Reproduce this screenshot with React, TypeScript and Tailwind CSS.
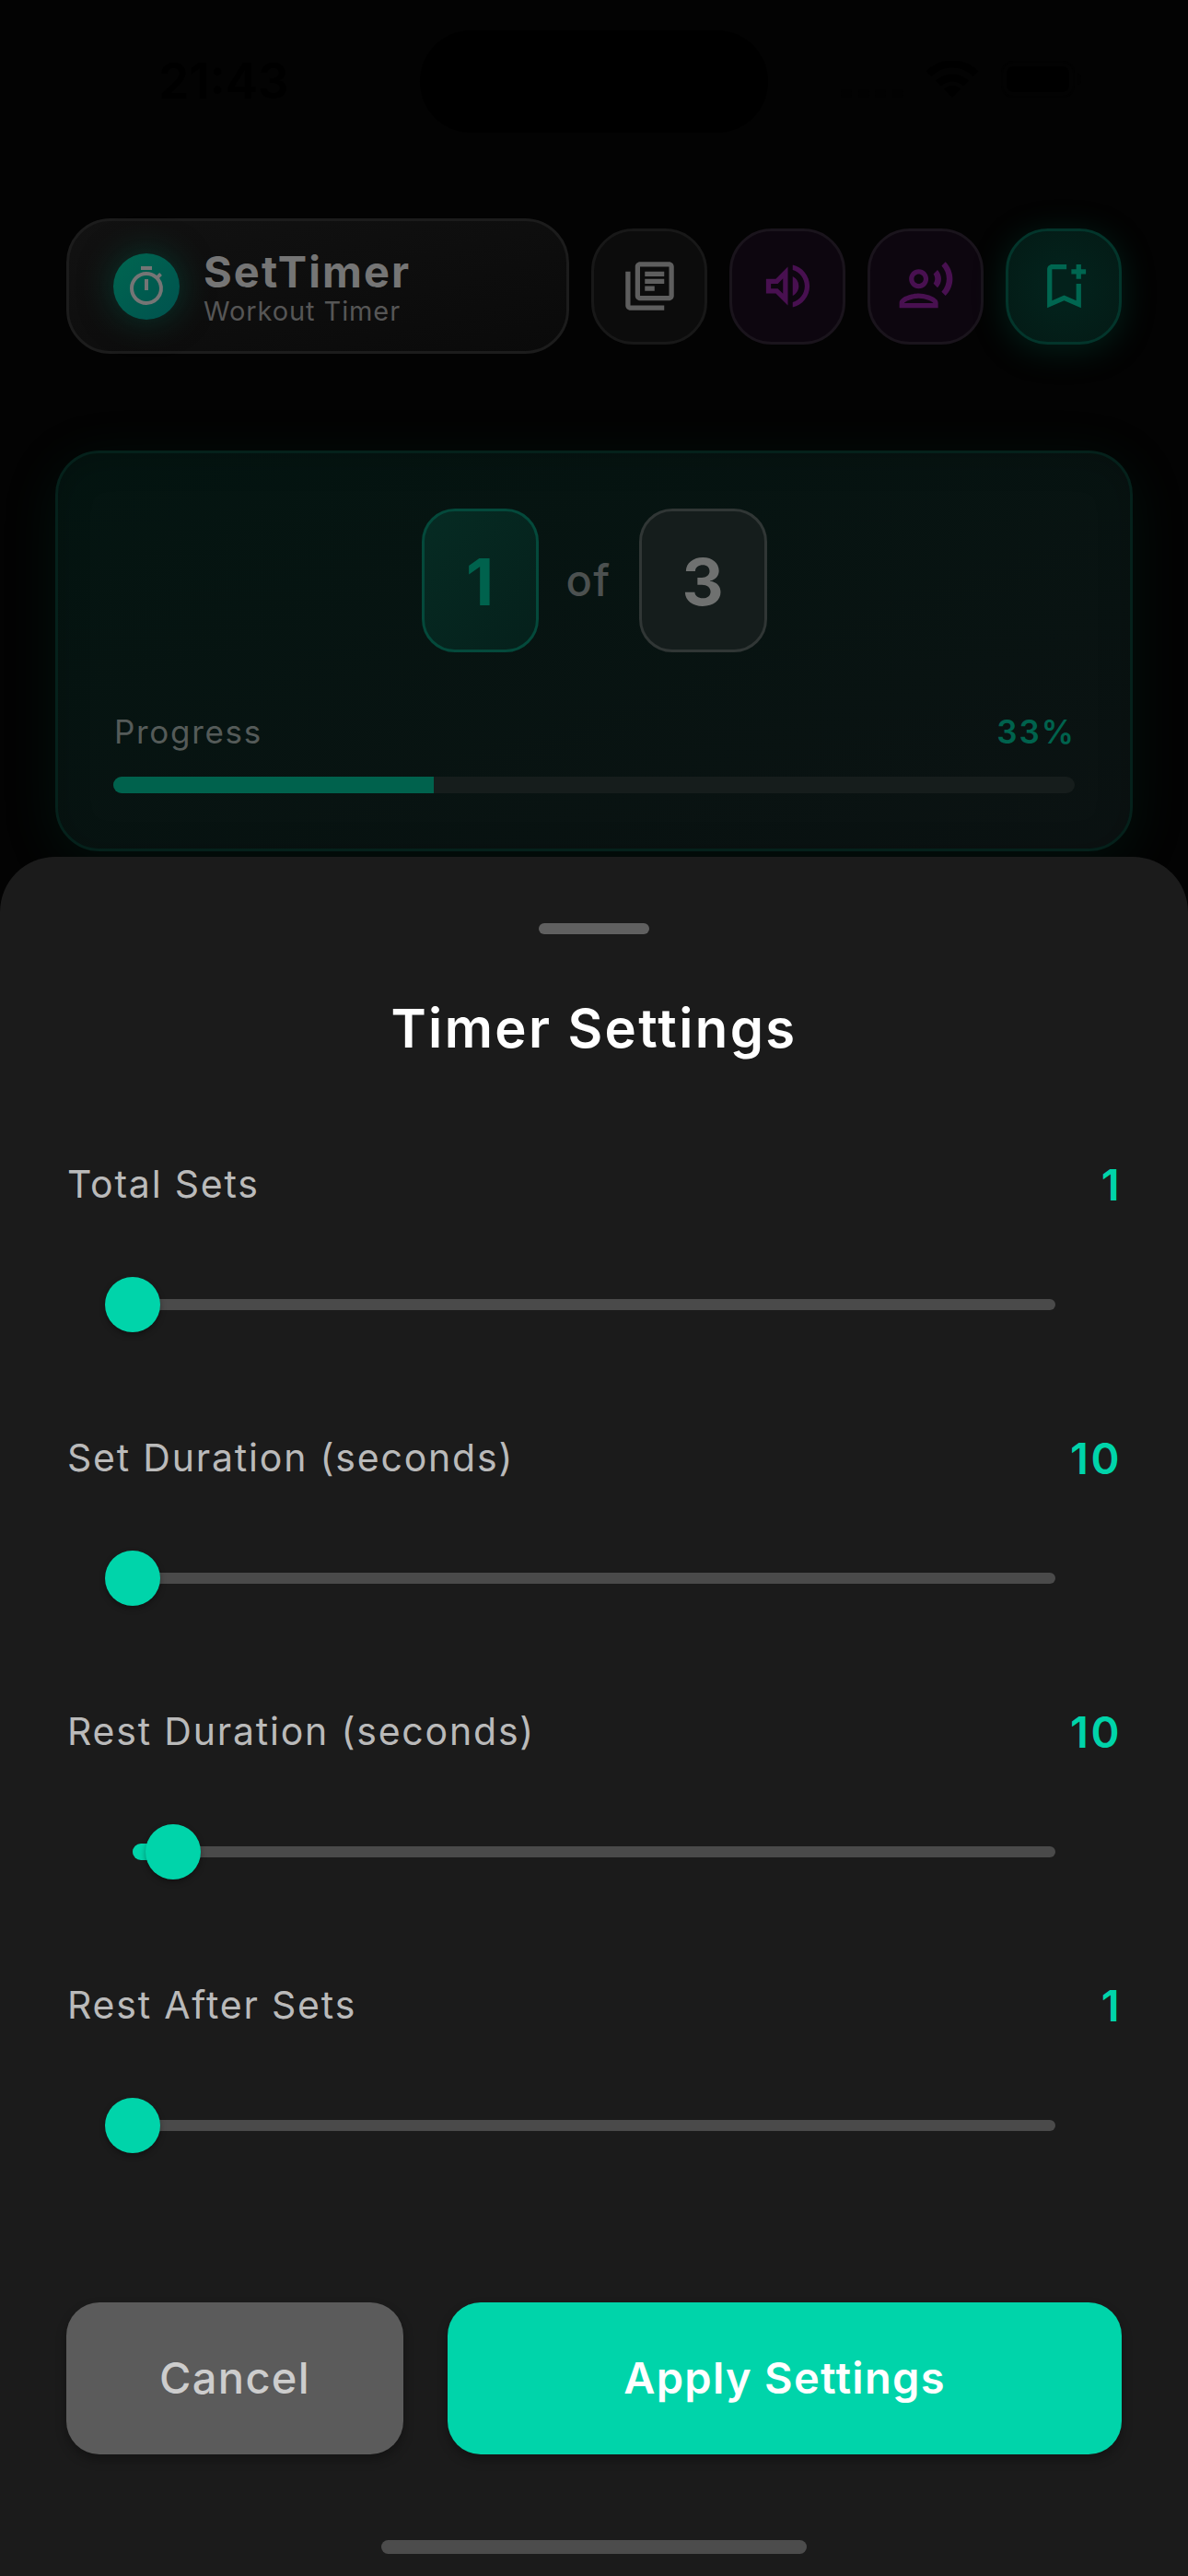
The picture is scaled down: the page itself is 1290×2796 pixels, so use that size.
import type { ReactNode } from 'react';
import {
  MdOutlineBookmarkAdd,
  MdOutlineLibraryBooks,
  MdOutlineRecordVoiceOver,
  MdOutlineTimer,
  MdOutlineVolumeUp,
} from 'react-icons/md';

type Setting = { label: string; value: number; fraction: number };

const settings: Setting[] = [
  { label: 'Total Sets', value: 1, fraction: 0 },
  { label: 'Set Duration (seconds)', value: 10, fraction: 0 },
  { label: 'Rest Duration (seconds)', value: 10, fraction: 43.5 / 1002 },
  { label: 'Rest After Sets', value: 1, fraction: 0 },
];

function StatusBar() {
  return (
    <div className="flex h-[177px] items-start">
      <div className="flex h-[177px] w-[456px] justify-center pt-[61px] pl-[30px]">
        <span className="text-[53px] leading-[54px] font-semibold text-black">21:43</span>
      </div>
      <div className="mt-[33px] h-[111px] w-[378px] rounded-full bg-black" />
      <div className="flex flex-1 items-center pt-[66px] pl-[79px]">
        <div className="flex h-10 w-[68px] items-end justify-between">
          {[0, 1, 2, 3].map((dot) => (
            <span key={dot} className="h-[9px] w-3 rounded-[3px] bg-[#020202]" />
          ))}
        </div>
        <svg className="ml-[24px] h-10 w-[58px]" viewBox="0 0 58 40">
          <path d="M29 40l-9-9.500a13 13 0 0 1 18 0z" />
          <path d="M14 24.500a21.500 21.500 0 0 1 30 0" fill="none" stroke="#000" strokeWidth="8" />
          <path d="M3.500 14a36.500 36.500 0 0 1 51 0" fill="none" stroke="#000" strokeWidth="8" />
        </svg>
        <div className="ml-6 h-10 w-[80px] rounded-[13px] border-2 border-[#020202] p-1">
          <div className="h-full rounded-[8px] bg-black" />
        </div>
        <div className="ml-[3px] h-3 w-1 rounded-r-full bg-[#020202]" />
      </div>
    </div>
  );
}

function ToolButton({ className, children }: { className: string; children: ReactNode }) {
  return (
    <button
      className={`flex size-[126px] shrink-0 items-center justify-center rounded-[46px] border-3 text-[63px] ${className}`}
    >
      {children}
    </button>
  );
}

function Header() {
  return (
    <header className="mt-[60px] flex h-[147px] items-center gap-6 px-[72px]">
      <div className="flex h-full w-[546px] items-center rounded-[48px] border-3 border-[#1c1c1c] bg-linear-to-br from-[#121212] to-[#0a0a0a] pl-12">
        <div className="flex size-[72px] items-center justify-center rounded-full bg-linear-to-br from-[#006650] to-[#00524e] text-[48px] text-[#757575] shadow-[0_0_36px_#00624d80]">
          <MdOutlineTimer />
        </div>
        <div className="ml-[26px] flex flex-col pt-1.5">
          <span className="text-[47px] leading-[48px] font-bold tracking-[2.1px] text-[#757575]">SetTimer</span>
          <span className="text-[29px] leading-[37px] tracking-[0.9px] text-[#565656]">Workout Timer</span>
        </div>
      </div>
      <ToolButton className="border-[#181818] bg-[#0c0c0c] text-[#5e5e5e]">
        <MdOutlineLibraryBooks />
      </ToolButton>
      <ToolButton className="border-[#1a141c] bg-[#0d060f] text-[#481050]">
        <MdOutlineVolumeUp />
      </ToolButton>
      <ToolButton className="border-[#1a141c] bg-[#0d060f] text-[#481050]">
        <MdOutlineRecordVoiceOver />
      </ToolButton>
      <ToolButton className="border-[#03352b] bg-[radial-gradient(circle,#03211b_30%,#041a15_100%)] text-[#006650] shadow-[0_6px_36px_#00624d4d]">
        <MdOutlineBookmarkAdd />
      </ToolButton>
    </header>
  );
}

function ProgressCard() {
  return (
    <section className="mx-[60px] mt-[105px] h-[435px] rounded-[48px] border-3 border-[#05211b] bg-linear-to-br from-[#041511] to-[#0b1212] p-[60px] shadow-[0_12px_60px_#00624d26,inset_0_6px_36px_rgba(0,0,0,0.2)]">
      <div className="flex h-[156px] items-center justify-center">
        <div className="flex h-full w-[127px] items-center justify-center rounded-[36px] border-3 border-[#04493b] bg-linear-to-br from-[#062b23] to-[#05201b] pt-[3px] text-[70px] font-bold text-[#00624d]">
          1
        </div>
        <span className="w-[109px] text-center text-[47px] font-medium tracking-[1.5px] text-[#4c5150]">of</span>
        <div className="flex h-full w-[139px] items-center justify-center rounded-[36px] border-3 border-[#303635] bg-[#151d1c] pt-[3px] text-[70px] font-bold text-[#6f7170]">
          3
        </div>
      </div>
      <div className="mt-16 flex h-[45px] items-center justify-between text-[35px] leading-[45px]">
        <span className="pl-px tracking-[1.7px] text-[#555b59]">Progress</span>
        <span className="-mr-px font-semibold tracking-[2px] text-[#00624d]">33%</span>
      </div>
      <div className="mt-[26px] h-[18px] overflow-hidden rounded-[9px] bg-[#161d1c]">
        <div className="h-full w-1/3 bg-[#00624d]" />
      </div>
    </section>
  );
}

function SettingSlider({ label, value, fraction }: Setting) {
  const left = `${fraction * 100}%`;
  return (
    <div className="h-[297px] px-[72px]">
      <div className="flex h-[57px] items-center justify-between">
        <span className="pl-px text-[41px] leading-[57px] tracking-[1.8px] text-[#bababa]">{label}</span>
        <span className="text-[47px] leading-[57px] font-semibold tracking-[2.5px] text-[#00d4aa]">{value}</span>
      </div>
      <div className="mx-[72px] mt-[30px] flex h-[144px] items-center">
        <div className="relative h-3 w-full rounded-full bg-[#4a4a4a]">
          <div className="absolute -top-[3px] left-0 h-[18px] rounded-l-[9px] bg-[#00d4aa]" style={{ width: left }} />
          <div
            className="absolute -top-6 size-[60px] -translate-x-1/2 rounded-full bg-[#00d4aa] shadow-[0_3px_6px_rgba(0,0,0,0.35)]"
            style={{ left }}
          />
        </div>
      </div>
    </div>
  );
}

export default function App() {
  return (
    <main className="flex h-[2796px] w-[1290px] flex-col overflow-hidden bg-[#030303] font-['Inter',sans-serif]">
      <StatusBar />
      <Header />
      <ProgressCard />
      <div className="relative mt-1.5 flex-1 rounded-t-[60px] bg-[#1b1b1b] pt-[72px]">
        <div className="mx-auto h-3 w-[120px] rounded-full bg-[#606060]" />
        <h1 className="mt-[66px] mb-[105px] text-center text-[58px] leading-[72px] font-semibold tracking-[2.4px] text-white">
          Timer Settings
        </h1>
        {settings.map((setting) => (
          <SettingSlider key={setting.label} {...setting} />
        ))}
        <div className="mt-[54px] flex h-[165px] gap-12 px-[72px] text-[47px] tracking-[1.3px]">
          <button className="w-[366px] rounded-[36px] bg-[#5b5b5b] font-medium text-[#cdcdcd] shadow-[0_6px_12px_rgba(0,0,0,0.3)]">
            Cancel
          </button>
          <button className="flex-1 rounded-[36px] bg-[#00d4aa] font-semibold text-white shadow-[0_6px_12px_rgba(0,0,0,0.3)]">
            Apply Settings
          </button>
        </div>
        <div className="mx-auto mt-[93px] h-[15px] w-[462px] rounded-full bg-[#4c4c4c]" />
      </div>
    </main>
  );
}
